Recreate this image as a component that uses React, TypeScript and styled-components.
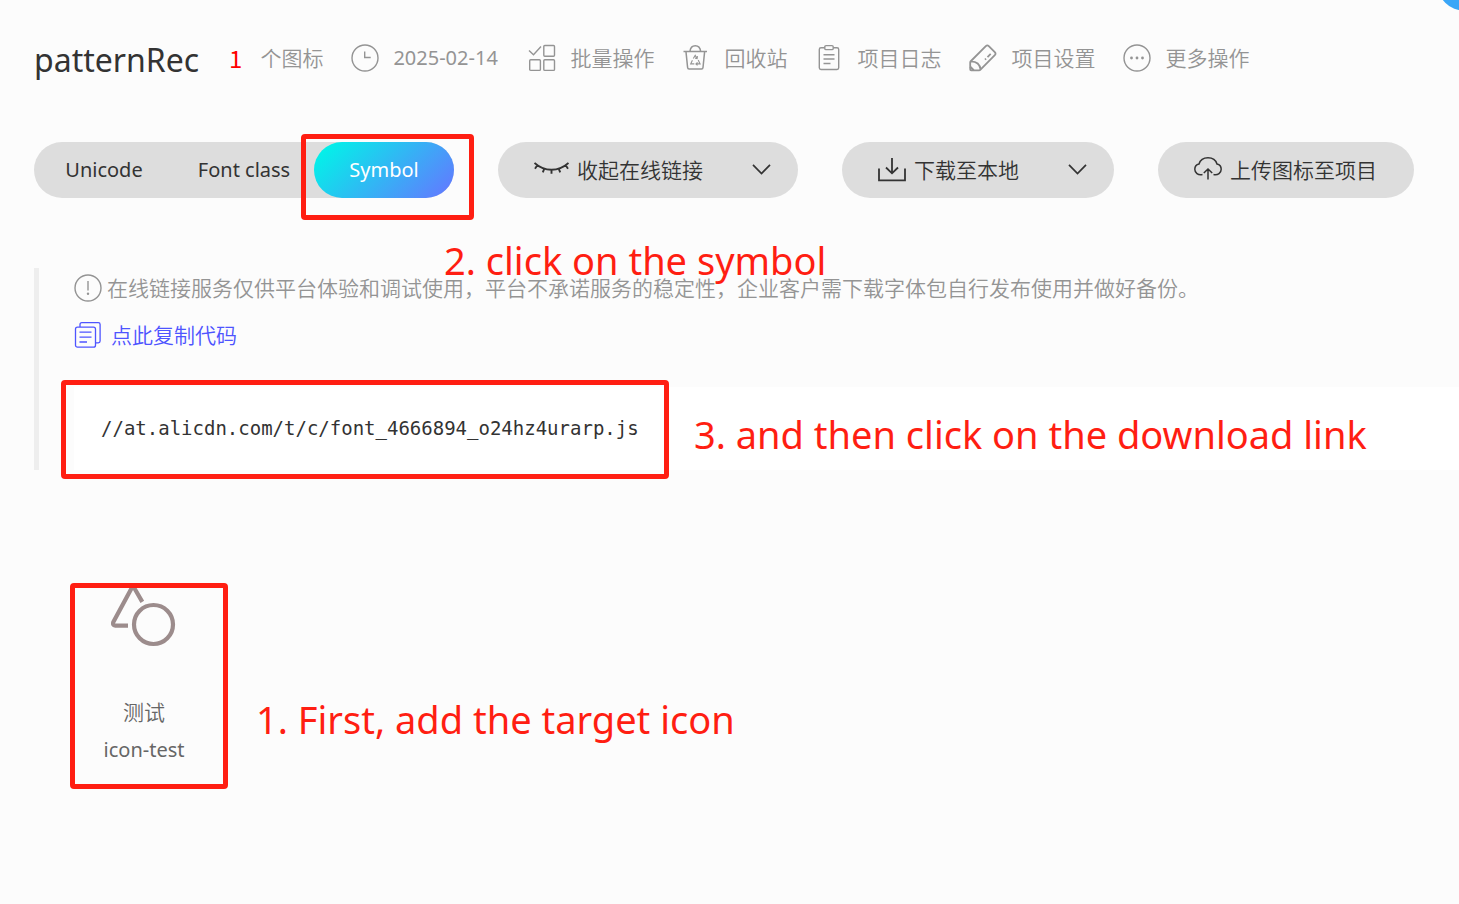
import React from 'react';
import styled, { createGlobalStyle } from 'styled-components';

const GlobalStyle = createGlobalStyle`
  *, *::before, *::after { box-sizing: border-box; }
  body {
    margin: 0;
    background: #fcfcfc;
    color: #333;
    font-family: "Noto Sans", "Noto Sans CJK SC", sans-serif;
    font-size: 21px;
    line-height: 32px;
    overflow-x: hidden;
  }
  button {
    font: inherit;
    color: inherit;
    border: 0;
    padding: 0;
    background: none;
    cursor: pointer;
    white-space: nowrap;
  }
  svg { display: block; flex: none; fill: none; stroke: currentColor; }
  p, h1 { margin: 0; }
`;

const Page = styled.div`
  padding: 38px 0 40px 34px;
`;

const FloatingHelp = styled.button`
  position: fixed;
  top: -45px;
  right: -34px;
  width: 56px;
  height: 56px;
  border-radius: 50%;
  background: #3aa6f7;
`;

const Header = styled.header`
  display: flex;
  align-items: center;
  gap: 28px;
  height: 40px;
  color: #949494;
  white-space: nowrap;
`;

const Title = styled.h1`
  padding: 4px 2px 0 0;
  color: #333;
  font-size: 32px;
  font-weight: 400;
  line-height: 40px;
`;

const Count = styled.span`
  display: flex;
  gap: 18px;
  font-weight: 350;
`;

const CountNumber = styled.span`
  color: #f00;
  font-family: "Noto Sans CJK SC", sans-serif;
  font-size: 24px;
  font-weight: 400;
`;

const Meta = styled.span`
  display: flex;
  align-items: center;
  gap: 14px;
`;

const DateText = styled.time`
  width: 107px;
  font-size: 20px;
`;

const Action = styled.button`
  display: flex;
  align-items: center;
  gap: 14px;
  font-weight: 350;
`;

const Toolbar = styled.div`
  display: flex;
  gap: 44px;
  margin-top: 64px;
`;

const Tabs = styled.div`
  display: grid;
  grid-template-columns: repeat(3, 140px);
  height: 56px;
  border-radius: 28px;
  background: #ddd;
  font-size: 20px;
`;

const TabCell = styled.div`
  position: relative;
  display: grid;
`;

const Tab = styled.button<{ $active?: boolean }>`
  border-radius: 28px;
  color: ${(p) => (p.$active ? '#fff' : '#333')};
  background: ${(p) => (p.$active ? 'linear-gradient(135deg, #00f5e8 5%, #617bff 95%)' : 'none')};
`;

const PillButton = styled.button<{ $width: number }>`
  display: flex;
  align-items: center;
  gap: 8px;
  width: ${(p) => p.$width}px;
  height: 56px;
  padding: 0 26px 0 36px;
  border-radius: 28px;
  background: #ddd;
  font-weight: 350;

  svg:nth-of-type(2) { margin-left: auto; }
`;

const LinkPanel = styled.section`
  position: relative;
  margin-top: 70px;
  padding: 4px 0 0 35px;
  border-left: 5px solid #eee;
`;

const Notice = styled.p`
  display: flex;
  align-items: center;
  gap: 5px;
  color: #949494;
  font-weight: 350;
  white-space: nowrap;
`;

const CopyButton = styled.button`
  display: flex;
  align-items: center;
  gap: 9px;
  margin-top: 15px;
  color: #4e54ff;
  font-weight: 350;
`;

const CodeBox = styled.div`
  position: relative;
  display: flex;
  align-items: center;
  height: 83px;
  margin-top: 36px;
  padding: 0 27px 2px;
  background: #fff;
`;

const CodeLink = styled.a`
  color: #333;
  font-family: "DejaVu Sans Mono", monospace;
  font-size: 19px;
  text-decoration: none;
`;

const IconList = styled.ul`
  display: flex;
  margin: 113px 0 0;
  padding: 0 0 0 36px;
  list-style: none;
`;

const IconCard = styled.li`
  position: relative;
  display: flex;
  flex-direction: column;
  align-items: center;
  width: 148px;
  height: 206px;
  color: #666;
`;

const IconName = styled.span`
  margin-top: 49px;
  font-weight: 350;
`;

const IconCode = styled.span`
  margin-top: 6px;
  font-size: 20px;
`;

const Marker = styled.span<{ $x: number; $y: number; $w: number; $h: number }>`
  position: absolute;
  z-index: 1;
  left: ${(p) => p.$x}px;
  top: ${(p) => p.$y}px;
  width: ${(p) => p.$w}px;
  height: ${(p) => p.$h}px;
  border: 5px solid #ff1e12;
  border-radius: 4px;
  pointer-events: none;
`;

const Step = styled.span<{ $x: number; $y: number }>`
  position: absolute;
  z-index: 1;
  left: ${(p) => p.$x}px;
  top: ${(p) => p.$y}px;
  color: #ff1e12;
  font-size: 38px;
  line-height: 48px;
  white-space: nowrap;
  pointer-events: none;
`;

const ClockIcon = () => (
  <svg width="28" height="28" viewBox="0 0 28 28" strokeWidth="1.4" aria-hidden="true">
    <circle cx="14" cy="14" r="13" />
    <path d="M13.7 7.5v6h6" />
  </svg>
);

const BatchIcon = () => (
  <svg width="28" height="28" viewBox="0 0 28 28" strokeWidth="1.4" aria-hidden="true">
    <path d="M1 6.5l4.5 4.2L13 2.5" />
    <rect x="15.8" y="1.5" width="10.7" height="10.7" rx="1" />
    <rect x="1.7" y="15.7" width="10.7" height="10.7" rx="1" />
    <rect x="15.8" y="15.7" width="10.7" height="10.7" rx="1" />
  </svg>
);

const TrashIcon = () => (
  <svg width="28" height="28" viewBox="0 0 28 28" strokeWidth="1.5" aria-hidden="true">
    <path d="M1.5 7.5h23.5M8 7.2C8.4 3.6 10.5 1.8 13.3 1.8s4.9 1.8 5.3 5.4M4 7.8l1.6 15.7q.1 1.5 1.5 1.5h12.4q1.4 0 1.5-1.5l1.6-15.7" />
    <path d="M11.3 14.5l1.9-3.1 1.9 3.1M10.4 16.3l-1.7 3.6h3.6M16.2 16l1.9 3.9h-4M15.5 18.3l-1.6 1.6 1.6 1.4M15.5 12.2l-.4 2.3-2-.4" strokeWidth="1.1" />
  </svg>
);

const LogIcon = () => (
  <svg width="28" height="28" viewBox="0 0 28 28" strokeWidth="1.4" aria-hidden="true">
    <path d="M9.8 3.8H6q-1.7 0-1.7 1.7v18.3q0 1.7 1.7 1.7h16q1.7 0 1.7-1.7V5.5q0-1.7-1.7-1.7h-3.8" />
    <rect x="9.8" y="1.6" width="8.4" height="4" rx="1.2" />
    <path d="M8.5 10.7h11M8.5 15h11M8.5 19.5h7" />
  </svg>
);

const PencilIcon = () => (
  <svg width="28" height="28" viewBox="0 0 28 28" strokeWidth="1.8" strokeLinejoin="round" aria-hidden="true">
    <path d="M1.5 17.5L16.8 2.1q1.5-1.4 3 0l6 6.1q1.5 1.5 0 3L11.5 25.6q-.6.7-1.5.7H2.2q-1 0-1-1v-6.7q0-.6.3-1.1zM2 17.3c5.5.2 9 3.5 9.6 8" />
    <path d="M1.2 22.7l3.5 3.6" strokeWidth="2" />
    <path d="M21.7 9.9l-3.2 3.2M17 14.7l-1 1" />
  </svg>
);

const MoreIcon = () => (
  <svg width="28" height="28" viewBox="0 0 28 28" strokeWidth="1.4" aria-hidden="true">
    <circle cx="14" cy="14" r="13" />
    <g fill="currentColor" stroke="none">
      <circle cx="8.5" cy="14" r="1.4" />
      <circle cx="14" cy="14" r="1.4" />
      <circle cx="19.5" cy="14" r="1.4" />
    </g>
  </svg>
);

const ClosedEyeIcon = () => (
  <svg width="35" height="28" viewBox="0 0 35 28" strokeWidth="1.9" aria-hidden="true">
    <path d="M.5 7c5 4.5 11 6.8 17 6.8S29.5 11.5 34.5 7M3.3 9.3L1 12.7M10.3 12.7L8.8 16.3M17.5 13.8V17.8M24.7 12.7l1.5 3.6M31.7 9.3l2.3 3.4" />
  </svg>
);

const DownloadIcon = () => (
  <svg width="28" height="28" viewBox="0 0 28 28" strokeWidth="1.8" aria-hidden="true">
    <path d="M1 12.5v11.8h26V12.5M14 2v15M8 11.5l6 5.8 6-5.8" />
  </svg>
);

const CloudIcon = () => (
  <svg width="28" height="28" viewBox="0 0 28 28" strokeWidth="1.5" aria-hidden="true">
    <path d="M8.5 18.5C4 19.5.8 16.7.8 13.3c0-2.6 1.7-4.7 4.2-5.3C6.1 4.3 9.5 1.8 14 1.8s7.9 2.5 9 6.2c2.5.6 4.2 2.7 4.2 5.3 0 3.4-3.2 6.2-7.7 5.2M14 23.5V13.3M9.8 17l4.2-4 4.2 4" />
  </svg>
);

const ChevronIcon = () => (
  <svg width="20" height="20" viewBox="0 0 20 20" strokeWidth="1.7" aria-hidden="true">
    <path d="M1 4.8l8.5 8.7 8.5-8.7" />
  </svg>
);

const InfoIcon = () => (
  <svg width="28" height="28" viewBox="0 0 28 28" strokeWidth="1.4" aria-hidden="true">
    <circle cx="14" cy="14" r="13" />
    <path d="M14 7v9.5" />
    <circle cx="14" cy="19.7" r="1.2" fill="currentColor" stroke="none" />
  </svg>
);

const CopyIcon = () => (
  <svg width="28" height="28" viewBox="0 0 28 28" strokeWidth="1.3" aria-hidden="true">
    <rect x="1.5" y="6.2" width="20" height="20" rx="2" />
    <path d="M6 6V3.5Q6 1.7 7.8 1.7h16.5q1.8 0 1.8 1.8V20q0 1.8-1.8 1.8H21.5M5.5 11.2h12M5.5 16.2h12M5.5 21h7.5" />
  </svg>
);

const ShapesIcon = () => (
  <svg width="66" height="64" viewBox="0 0 66 64" strokeWidth="4.2" color="#9c8c8c" aria-hidden="true">
    <path d="M17 42.7H4.5q-3.5-.5-2-4L20.3 5.7q1.7-3 3.4 0l7.6 13.2" />
    <circle cx="42.5" cy="41.5" r="19.5" />
  </svg>
);

const actions = [
  { label: '批量操作', Icon: BatchIcon },
  { label: '回收站', Icon: TrashIcon },
  { label: '项目日志', Icon: LogIcon },
  { label: '项目设置', Icon: PencilIcon },
  { label: '更多操作', Icon: MoreIcon },
];

export default function App() {
  return (
    <Page>
      <GlobalStyle />
      <FloatingHelp type="button" aria-label="帮助" />
      <Header>
        <Title>patternRec</Title>
        <Count>
          <CountNumber>1</CountNumber>
          个图标
        </Count>
        <Meta>
          <ClockIcon />
          <DateText dateTime="2025-02-14">2025-02-14</DateText>
        </Meta>
        {actions.map(({ label, Icon }) => (
          <Action key={label} type="button">
            <Icon />
            {label}
          </Action>
        ))}
      </Header>

      <Toolbar>
        <Tabs>
          <TabCell><Tab type="button">Unicode</Tab></TabCell>
          <TabCell><Tab type="button">Font class</Tab></TabCell>
          <TabCell>
            <Tab type="button" $active aria-pressed="true">Symbol</Tab>
            <Marker $x={-13} $y={-8} $w={173} $h={86} />
          </TabCell>
        </Tabs>
        <PillButton type="button" $width={300}>
          <ClosedEyeIcon />
          收起在线链接
          <ChevronIcon />
        </PillButton>
        <PillButton type="button" $width={272}>
          <DownloadIcon />
          下载至本地
          <ChevronIcon />
        </PillButton>
        <PillButton type="button" $width={256}>
          <CloudIcon />
          上传图标至项目
        </PillButton>
      </Toolbar>

      <LinkPanel>
        <Step $x={405} $y={-32}>2. click on the symbol</Step>
        <Notice>
          <InfoIcon />
          在线链接服务仅供平台体验和调试使用，平台不承诺服务的稳定性，企业客户需下载字体包自行发布使用并做好备份。
        </Notice>
        <CopyButton type="button">
          <CopyIcon />
          点此复制代码
        </CopyButton>
        <CodeBox>
          <CodeLink href="//at.alicdn.com/t/c/font_4666894_o24hz4urarp.js">
            //at.alicdn.com/t/c/font_4666894_o24hz4urarp.js
          </CodeLink>
          <Marker $x={-13} $y={-7} $w={608} $h={99} />
          <Step $x={620} $y={23}>3. and then click on the download link</Step>
        </CodeBox>
      </LinkPanel>

      <IconList>
        <IconCard>
          <ShapesIcon />
          <IconName>测试</IconName>
          <IconCode>icon-test</IconCode>
          <Marker $x={0} $y={0} $w={158} $h={206} />
          <Step $x={186} $y={112}>1. First, add the target icon</Step>
        </IconCard>
      </IconList>
    </Page>
  );
}
